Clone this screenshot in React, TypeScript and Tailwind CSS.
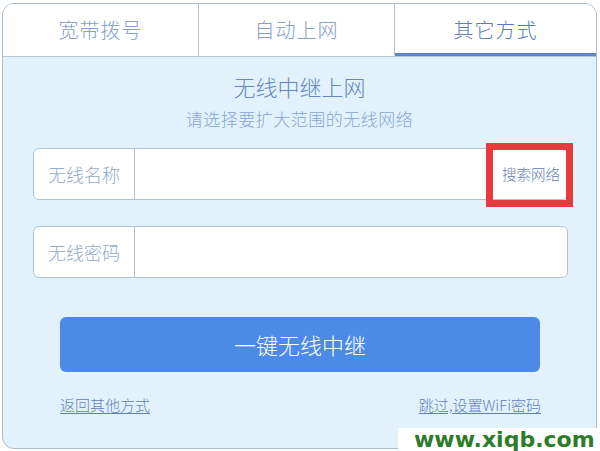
import React from "react";

const Tab = ({ label, active, last }: { label: string; active?: boolean; last?: boolean }) => (
  <div
    className={
      "flex items-center justify-center text-[20px] tracking-[1px] " +
      (last ? "flex-1 " : "w-[196px] border-r border-[#b3c7d6] ") +
      (active
        ? "border-b-[3px] border-b-[#5a88c6] text-[#5b7db6] pt-[3px]"
        : "text-[#86a1cb]")
    }
  >
    {label}
  </div>
);

const Field = ({ label, extra }: { label: string; extra?: string }) => (
  <div className="flex h-[52px] w-[535px] ml-[30px] bg-white border border-[#abc3d3] rounded-[6px]">
    <div className="w-[101px] flex items-center justify-center border-r border-[#abc3d3] text-[18px] text-[#93aacb]">
      {label}
    </div>
    <div className="flex-1" />
    {extra && (
      <div className="flex items-center pr-[7px] text-[14.5px] text-[#5f80b7]">{extra}</div>
    )}
  </div>
);

export default function App() {
  return (
    <div className="relative w-[600px] h-[451px] bg-white overflow-hidden font-['Noto_Sans_CJK_SC',sans-serif] font-light">
      <div className="ml-[2px] mt-[3px] w-[595px] h-[446px] border border-[#a9bfcf] rounded-[12px] bg-[#e2f2fd] overflow-hidden flex flex-col">
        <div className="flex h-[53px] bg-white border-b border-[#b3c7d6]">
          <Tab label="宽带拨号" />
          <Tab label="自动上网" />
          <Tab label="其它方式" active last />
        </div>

        <div className="flex flex-col">
          <div className="mt-[18px] text-center text-[22px] leading-[22px] text-[#6788bf]">无线中继上网</div>
          <div className="mt-[14px] text-center text-[17px] leading-[16px] tracking-[0.5px] text-[#87a5d4]">
            请选择要扩大范围的无线网络
          </div>

          <div className="mt-[21px]">
            <Field label="无线名称" extra="搜索网络" />
          </div>
          <div className="mt-[26px]">
            <Field label="无线密码" />
          </div>

          <button className="mt-[39px] ml-[57px] w-[480px] h-[55px] rounded-[6px] bg-[#4b8ae6] text-white text-[22px]">
            一键无线中继
          </button>

          <div className="mt-[25px] ml-[57px] w-[481px] flex justify-between text-[15px] leading-[16px] text-[#5f81b9]">
            <span className="underline underline-offset-2">返回其他方式</span>
            <span className="underline underline-offset-2">跳过,设置WiFi密码</span>
          </div>
        </div>
      </div>

      <div className="absolute left-[486px] top-[143px] w-[87px] h-[64px] border-[7px] border-[#e8393d]" />

      <div className="absolute left-[398px] top-[428px] right-0 bottom-0 bg-white flex items-center pl-[16px]">
        <span className="font-['DejaVu_Sans',sans-serif] font-bold text-[22px] leading-[22px] text-[#2e7b2b]">
          www.xiqb.com
        </span>
      </div>
    </div>
  );
}
